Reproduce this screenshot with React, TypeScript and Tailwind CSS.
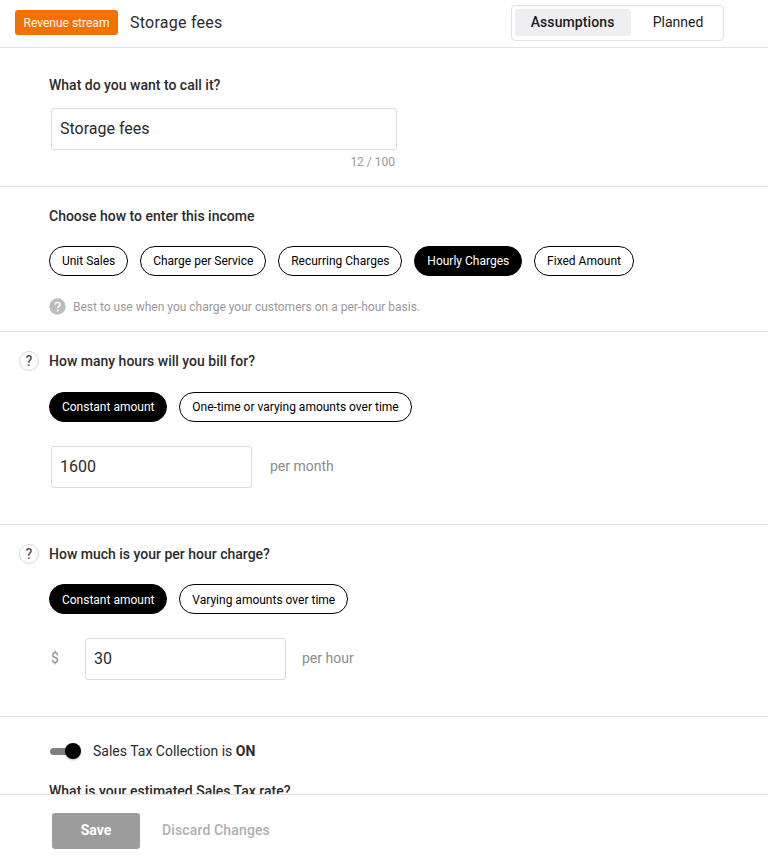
import React from "react";

function Pill({ label, active, low }: { label: string; active?: boolean; low?: boolean }) {
  return (
    <div
      className={
        (active
          ? "h-[30px] px-[11.95px] flex items-center rounded-[15px] border border-black bg-black text-white text-[12px] font-normal whitespace-nowrap"
          : "h-[30px] px-[11.95px] flex items-center rounded-[15px] border border-black bg-white text-black text-[12px] font-normal whitespace-nowrap") +
        (low ? " pt-[2px]" : "")
      }
    >
      {label}
    </div>
  );
}

function Help() {
  return (
    <div className="w-5 h-5 rounded-full border border-[#d8d8d8] flex items-center justify-center text-[14px] font-medium text-[#555] bg-white">
      ?
    </div>
  );
}

function Field({ value, width }: { value: string; width: string }) {
  return (
    <div className={`${width} h-[42px] rounded-[3px] border border-[#dcdcdc] bg-white flex items-center px-2 text-[16px] text-[#2b2b2b]`}>
      {value}
    </div>
  );
}

export default function App() {
  return (
    <div className="w-[768px] h-[863px] bg-white flex flex-col overflow-hidden font-['Roboto',sans-serif] text-[#2b2b2b]">
      <header className="h-[48px] shrink-0 border-b border-[#e2e2e2] flex items-center pl-[15px] pb-[2px]">
        <div className="h-[25px] w-[103px] rounded-[3px] bg-[#f47100] text-white text-[12px] flex items-center justify-center">
          Revenue stream
        </div>
        <div className="ml-3 text-[16px] tracking-[0.25px] text-[#2b2b2b]">Storage fees</div>
        <div className="ml-[288px] w-[213px] h-[36px] rounded-[4px] border border-[#e2e2e2] flex items-center p-[3px]">
          <div className="w-[116px] h-[27px] rounded-[3px] bg-[#efeff1] text-[14px] font-medium tracking-[0.1px] text-[#1c1c1c] flex items-center justify-center">
            Assumptions
          </div>
          <div className="flex-1 pl-[6px] text-[14px] text-[#1c1c1c] flex items-center justify-center">Planned</div>
        </div>
      </header>

      <main className="flex-1 min-h-0 overflow-hidden">
        <section className="h-[139px] border-b border-[#e2e2e2] pl-[49px] pt-[29px]">
          <div className="text-[14px] font-medium leading-4 text-[#2b2b2b]">What do you want to call it?</div>
          <div className="ml-[2px] mt-[15px]">
            <Field value="Storage fees" width="w-[346px]" />
            <div className="w-[344px] mt-[5px] text-right text-[12px] leading-[14px] text-[#999]">12 / 100</div>
          </div>
        </section>

        <section className="h-[145px] border-b border-[#e2e2e2] pl-[49px] pt-[21px]">
          <div className="text-[14px] font-medium leading-4 text-[#2b2b2b]">Choose how to enter this income</div>
          <div className="mt-[22px] flex gap-3">
            <Pill label="Unit Sales" />
            <Pill label="Charge per Service" />
            <Pill label="Recurring Charges" />
            <Pill label="Hourly Charges" active />
            <Pill label="Fixed Amount" />
          </div>
          <div className="mt-[22px] flex items-center gap-[7px] text-[12px] leading-4 text-[#999]">
            <svg width="17" height="17" viewBox="0 0 24 24">
              <circle cx="12" cy="12" r="11.5" fill="#bdbdbd" />
              <path d="M8.6 9.4c.2-2 1.6-3.1 3.5-3.1 2 0 3.4 1.2 3.4 2.9 0 1.3-.7 2-1.7 2.7-1 .7-1.3 1.1-1.3 2.3" fill="none" stroke="#fff" strokeWidth="2.2" />
              <circle cx="12.4" cy="17.6" r="1.4" fill="#fff" />
            </svg>
            <span>Best to use when you charge your customers on a per-hour basis.</span>
          </div>
        </section>

        <section className="h-[193px] border-b border-[#e2e2e2] pt-[19px]">
          <div className="flex items-center pl-[19px] gap-[10px]">
            <Help />
            <div className="text-[14px] font-medium leading-5 text-[#2b2b2b]">How many hours will you bill for?</div>
          </div>
          <div className="mt-[21px] pl-[49px] flex gap-3">
            <Pill label="Constant amount" active />
            <Pill label="One-time or varying amounts over time" />
          </div>
          <div className="mt-[24px] pl-[51px] flex items-center">
            <Field value="1600" width="w-[201px]" />
            <span className="ml-[18px] pb-[2px] text-[14px] text-[#8c8c8c]">per month</span>
          </div>
        </section>

        <section className="h-[192px] border-b border-[#e2e2e2] pt-[19px]">
          <div className="flex items-center pl-[19px] gap-[10px]">
            <Help />
            <div className="text-[14px] font-medium leading-5 text-[#2b2b2b]">How much is your per hour charge?</div>
          </div>
          <div className="mt-[20px] pl-[49px] flex gap-3">
            <Pill label="Constant amount" active low />
            <Pill label="Varying amounts over time" low />
          </div>
          <div className="mt-[24px] pl-[51px] flex items-center">
            <span className="w-[34px] pb-[2px] text-[14px] text-[#8c8c8c]">$</span>
            <Field value="30" width="w-[201px]" />
            <span className="ml-[16px] pb-[1px] text-[14px] text-[#8c8c8c]">per hour</span>
          </div>
        </section>

        <section className="pl-[49px] pt-[25px]">
          <div className="flex items-center h-[18px]">
            <div className="relative w-[32px] h-[18px] shrink-0">
              <div className="absolute left-[1px] top-[6px] w-[28px] h-[7px] rounded-full bg-[#808080]" />
              <div className="absolute left-[16px] top-[1px] w-[16px] h-[16px] rounded-full bg-black shadow-[0_1px_2px_rgba(0,0,0,0.3)]" />
            </div>
            <div className="ml-[12px] text-[14px] text-[#2b2b2b]">
              Sales Tax Collection is <span className="font-bold">ON</span>
            </div>
          </div>
          <div className="mt-[21px] text-[14px] font-medium leading-5 text-[#2b2b2b] whitespace-nowrap">What is your estimated Sales Tax rate?</div>
        </section>
      </main>

      <footer className="h-[69px] shrink-0 border-t border-[#e2e2e2] bg-white flex items-start pl-[52px] pt-[18px]">
        <div className="w-[88px] h-[36px] pb-[2px] rounded-[3px] bg-[#9c9c9c] text-white text-[14px] font-bold flex items-center justify-center">
          Save
        </div>
        <div className="ml-[22px] h-[36px] pb-[2px] flex items-center text-[14px] font-medium tracking-[0.14px] text-[#b0b0b0]">Discard Changes</div>
      </footer>
    </div>
  );
}
